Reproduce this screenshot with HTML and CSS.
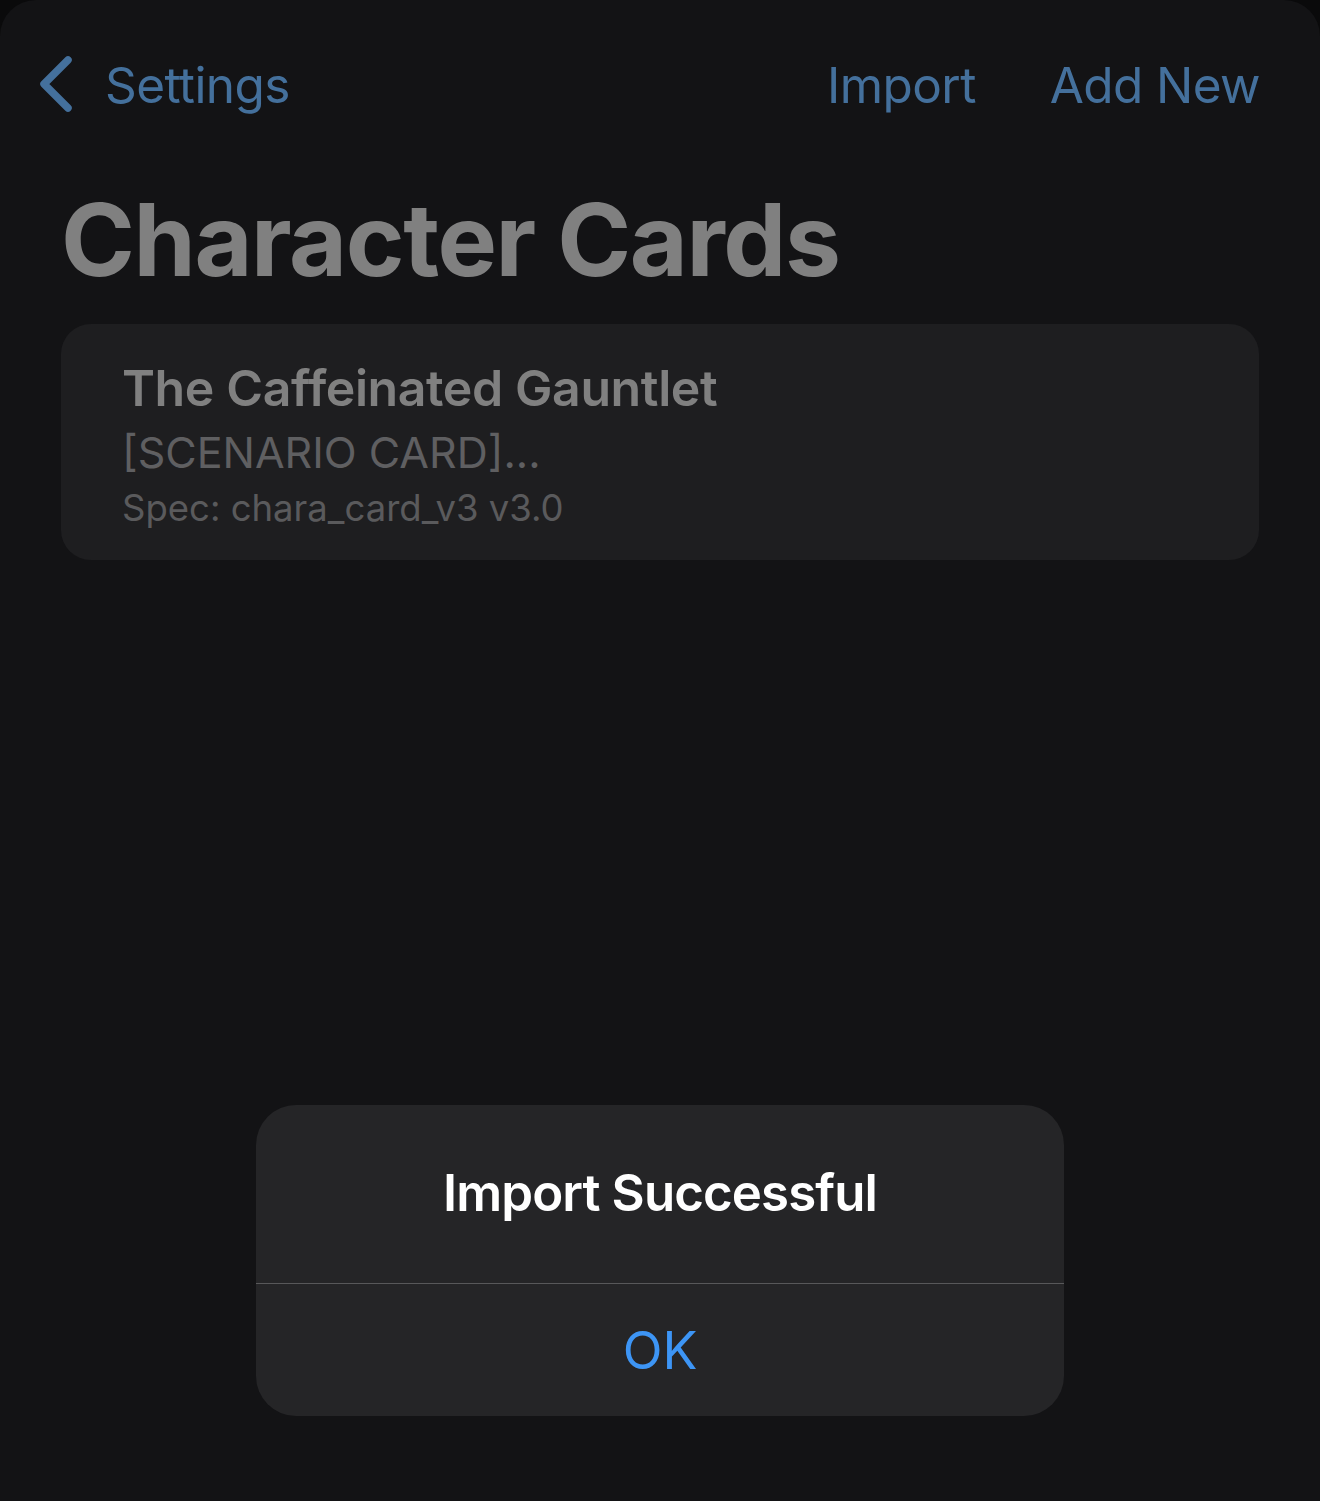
FILE: index.html
```html
<!DOCTYPE html>
<html>
<head>
<meta charset="utf-8">
<link rel="stylesheet" href="styles.css">
</head>
<body>
<div class="screen">
  <nav class="navbar">
    <div class="back">
      <svg class="chevron" width="40" height="60" viewBox="0 0 40 60"><path d="M30 4 L6 28 L30 52" fill="none" stroke="#44709c" stroke-width="7.5" stroke-linecap="round" stroke-linejoin="round"/></svg>
      <span class="nav-link">Settings</span>
    </div>
    <div class="actions">
      <span class="nav-link">Import</span>
      <span class="nav-link">Add New</span>
    </div>
  </nav>
  <h1 class="large-title">Character Cards</h1>
  <div class="card">
    <div class="card-title">The Caffeinated Gauntlet</div>
    <div class="card-sub">[SCENARIO CARD]...</div>
    <div class="card-spec">Spec: chara_card_v3 v3.0</div>
  </div>
  <div class="alert">
    <div class="alert-title">Import Successful</div>
    <div class="alert-btn">OK</div>
  </div>
</div>
</body>
</html>
```
FILE: styles.css
```css
html, body {
  margin: 0;
  padding: 0;
  background: #0a0a0b;
}
body {
  font-family: Inter, "Noto Sans", sans-serif;
}
.screen {
  position: relative;
  width: 1320px;
  height: 1501px;
  background: #131315;
  border-radius: 36px 36px 0 0;
  overflow: hidden;
}
.navbar {
  display: flex;
  justify-content: space-between;
  align-items: center;
  padding: 52px 60px 0 38px;
  height: 66px;
}
.back {
  display: flex;
  align-items: center;
  gap: 27px;
}
.chevron {
  display: block;
  margin-top: 2px;
}
.nav-link {
  color: #44709c;
  font-size: 49.5px;
  letter-spacing: -0.6px;
}
.actions {
  display: flex;
  gap: 74px;
}
.large-title {
  margin: 62px 0 0 61px;
  font-size: 100px;
  font-weight: 700;
  color: #808080;
  letter-spacing: -1.4px;
  line-height: 120px;
}
.card {
  margin: 24px 61px 0 61px;
  height: 236px;
  box-sizing: border-box;
  background: #1e1e20;
  border-radius: 30px;
  padding: 34px 61px 0;
}
.card-title {
  font-size: 50px;
  font-weight: 600;
  color: #808080;
  line-height: 60px;
  letter-spacing: -0.4px;
}
.card-sub {
  font-size: 43px;
  color: #5f5f61;
  line-height: 60px;
  margin-top: 4px;
}
.card-spec {
  font-size: 36.5px;
  color: #5a5a5c;
  line-height: 48px;
  margin-top: 2px;
}
.alert {
  position: absolute;
  left: 256px;
  top: 1105px;
  width: 808px;
  height: 311px;
  background: #252527;
  border-radius: 40px;
  display: flex;
  flex-direction: column;
}
.alert-title {
  height: 179px;
  box-sizing: border-box;
  border-bottom: 1.5px solid #58585a;
  display: flex;
  justify-content: center;
  align-items: center;
  font-size: 51px;
  font-weight: 600;
  color: #ffffff;
  letter-spacing: -0.9px;
  padding-bottom: 4px;
}
.alert-btn {
  flex: 1;
  display: flex;
  justify-content: center;
  align-items: center;
  font-size: 52px;
  color: #3d95f5;
}
```
